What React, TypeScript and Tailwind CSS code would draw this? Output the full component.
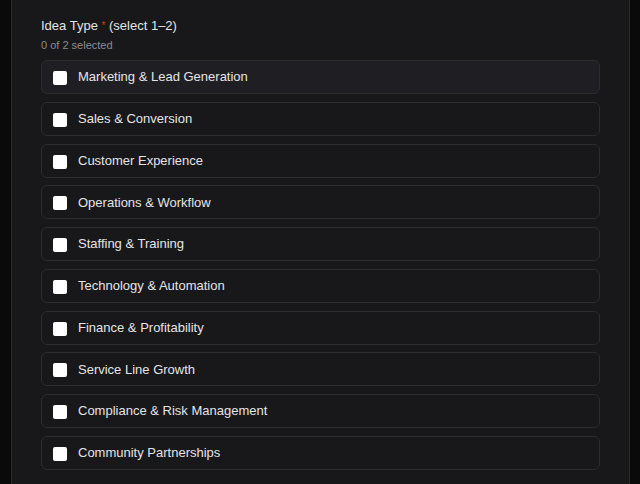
import React from "react";

const items = [
  "Marketing & Lead Generation",
  "Sales & Conversion",
  "Customer Experience",
  "Operations & Workflow",
  "Staffing & Training",
  "Technology & Automation",
  "Finance & Profitability",
  "Service Line Growth",
  "Compliance & Risk Management",
  "Community Partnerships",
];

export default function App() {
  return (
    <div
      className="w-[640px] h-[484px] overflow-hidden bg-[#0a0a0b] flex"
      style={{ fontFamily: '"Liberation Sans", Arial, sans-serif' }}
    >
      <div className="ml-[11px] w-[619px] h-full bg-[#18181a] border-x border-[#2a2a2d] px-[29px] pt-[16px]">
        <div className="text-[13px] leading-[20px] text-[#e4e4e7]">
          Idea Type <span className="text-[#c2410c] text-[10px] align-top">*</span> (select 1–2)
        </div>
        <div className="text-[11px] leading-[16px] text-[#8b8b93] mt-[1px]">0 of 2 selected</div>
        <div className="mt-[7px] flex flex-col gap-[7.78px]">
          {items.map((t, i) => (
            <label
              key={t}
              className={`flex items-center h-[34px] rounded-md border border-[#2c2c30] pl-[11px] ${
                i === 0 ? "bg-[#1f1f23]" : "bg-[#18181a]"
              }`}
            >
              <span className="w-[14px] h-[14px] bg-white rounded-[2px] mt-[2px] shrink-0" />
              <span className="ml-[11px] text-[13px] text-[#e4e4e7]">{t}</span>
            </label>
          ))}
        </div>
      </div>
    </div>
  );
}
